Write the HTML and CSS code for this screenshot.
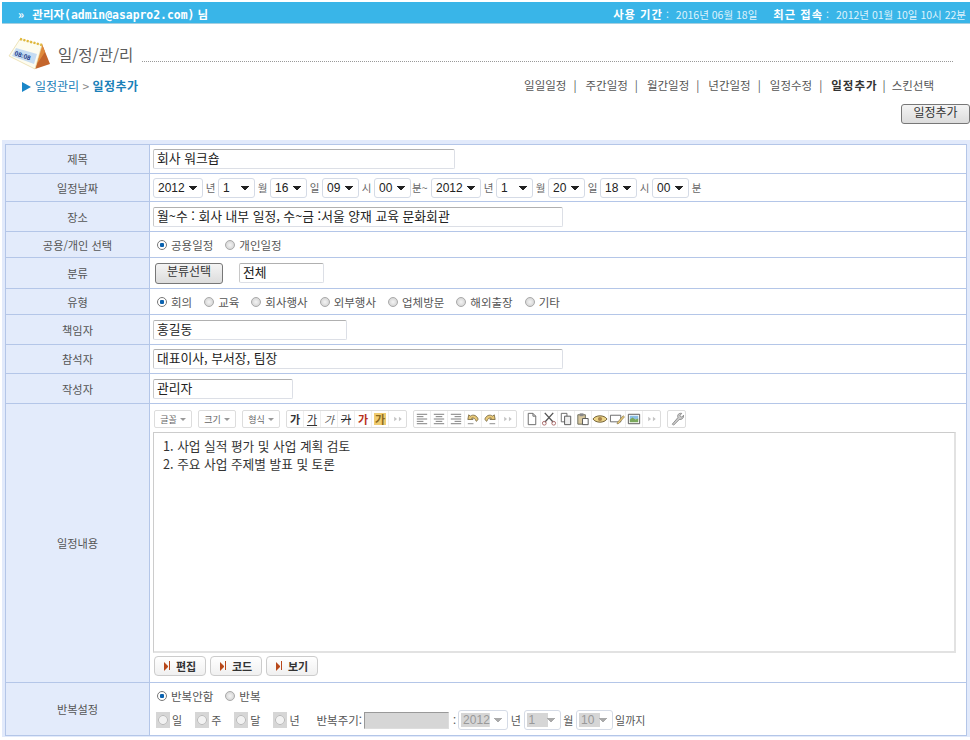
FILE: index.html
```html
<!DOCTYPE html>
<html lang="ko">
<head>
    <meta charset="UTF-8">
    <title>일정관리</title>
    <link rel="stylesheet" href="styles.css">
</head>
<body>
    <svg class="defs" width="0" height="0">
        <symbol id="more" viewBox="0 0 17 17"><path d="M5 6l3 2.500-3 2.500zM10 6l3 2.500-3 2.500z" fill="#c4c4c4"/></symbol>
        <symbol id="left" viewBox="0 0 17 17"><path d="M3 3.500h11M3 6h7M3 8.500h11M3 11h7M3 13.500h11" stroke="#777" fill="none"/></symbol>
        <symbol id="center" viewBox="0 0 17 17"><path d="M3 3.500h11M5 6h7M3 8.500h11M5 11h7M3 13.500h11" stroke="#777" fill="none"/></symbol>
        <symbol id="right" viewBox="0 0 17 17"><path d="M3 3.500h11M7 6h7M3 8.500h11M7 11h7M3 13.500h11" stroke="#777" fill="none"/></symbol>
        <symbol id="undo" viewBox="0 0 17 17"><path d="M3 9l1-5 1.500 1.500C9 3 13 5 14 9l-2 2C11 8 9 7 7 7.500L8.500 9z" fill="#e8c878" stroke="#6a5a30" stroke-width=".8"/><path d="M3 13.500h6" stroke="#888"/></symbol>
        <symbol id="redo" viewBox="0 0 17 17"><path d="M14 9l-1-5-1.500 1.500C8 3 4 5 3 9l2 2c1-3 3-4 5-3.500L8.500 9z" fill="#e8c878" stroke="#6a5a30" stroke-width=".8"/><path d="M8 13.500h6" stroke="#888"/></symbol>
        <symbol id="doc" viewBox="0 0 17 17"><path d="M4.500 2.500h5l3 3v9h-8zM9.500 2.500v3h3" fill="#fff" stroke="#666"/></symbol>
        <symbol id="cut" viewBox="0 0 17 17"><path d="M4 2l9 10M13 2l-9 10" stroke="#555" stroke-width="1.400"/><circle cx="3.500" cy="13" r="2" fill="none" stroke="#a66"/><circle cx="13.500" cy="13" r="2" fill="none" stroke="#a66"/></symbol>
        <symbol id="copy" viewBox="0 0 17 17"><path d="M3.500 2.500h6v9h-6z" fill="#fff" stroke="#666"/><path d="M7 5.500h6.500v9H7z" fill="#eee" stroke="#555"/></symbol>
        <symbol id="paste" viewBox="0 0 17 17"><path d="M3 4h8v10H3z" fill="#d8c8a0" stroke="#665"/><path d="M5 2.500h4v3H5z" fill="#888"/><path d="M8 8h6v6.500H8z" fill="#fff" stroke="#555"/></symbol>
        <symbol id="eye" viewBox="0 0 17 17"><path d="M1 8.500c3-4.500 12-4.500 15 0-3 4.500-12 4.500-15 0z" fill="#ecd488" stroke="#6b5a30"/><circle cx="8.500" cy="8.500" r="2.200" fill="#a8844a"/></symbol>
        <symbol id="note" viewBox="0 0 17 17"><path d="M1.500 4.500h11v7h-11z" fill="#fff" stroke="#666"/><path d="M9 12l6-7 1.500 1.200-6 7-2 .5z" fill="#e8c878" stroke="#7a6a3a" stroke-width=".6"/></symbol>
        <symbol id="pic" viewBox="0 0 17 17"><path d="M2.500 3.500h12v10h-12z" fill="#fff" stroke="#555"/><path d="M4 5h9v4H4z" fill="#8cc0e6"/><path d="M4 12V9l3-2 3 2 3-1v4z" fill="#7aa85c"/></symbol>
        <symbol id="wrench" viewBox="0 0 17 17"><path d="M4 14l6-7c-1-3 1-5 4-4.500l-2 2.500 2 1.500 2-2c.5 3-2 5-4.500 4.500L5.500 15z" fill="#ccc" stroke="#777" stroke-width=".8"/></symbol>
    </svg>

    <div class="topbar">
        <div class="user"><span class="arrows">»</span> 관리자<span class="latin">(admin@asapro2.com)</span> 님</div>
        <div class="period"><b>사용 기간</b><i class="sep">:</i>2016년 06월 18일<b class="last">최근 접속</b><i class="sep">:</i>2012년 01월 10일 10시 22분</div>
    </div>

    <div class="header">
        <div class="title-row">
            <svg class="logo" width="44" height="36" viewBox="0 0 44 36">
                <path d="M34 7l8 20-15 5z" fill="#c4652c"/>
                <path d="M34 7l3 8-8 12z" fill="#e08a3c"/>
                <path d="M12 2L34 8 27 32 1 19z" fill="#fdfcf0" stroke="#e6d9a0" stroke-width=".7"/>
                <path d="M12 2l22 6" stroke="#e0b83c" stroke-width="2.400" stroke-dasharray="2 1.500" fill="none"/>
                <path d="M8 11L29 17 26 27 4 19z" fill="#c6dcf2"/>
                <text class="logo-text" transform="translate(6 18) rotate(19)">08:08</text>
            </svg>
            <h1 class="page-title">일/정/관/리</h1>
            <div class="dots"></div>
        </div>
        <div class="nav-row">
            <div class="crumb"><i class="tri"></i>일정관리 <span class="gt">&gt;</span> <b>일정추가</b></div>
            <div class="nav">
                <a>일일일정</a><s>|</s><a>주간일정</a><s>|</s><a>월간일정</a><s>|</s><a>년간일정</a><s>|</s><a>일정수정</a><s>|</s><a class="on">일정추가</a><s class="tight">|</s><a>스킨선택</a>
            </div>
        </div>
        <div class="btn-row"><button class="btn btn-add">일정추가</button></div>
    </div>

    <div class="wrap">
        <table class="form">
            <tr class="h29"><th>제목</th><td><input class="w302" value="회사 워크숍"></td></tr>
            <tr class="h28"><th>일정날짜</th><td>
                <div class="dates">
                    <select class="y"><option>2012</option></select><span>년</span>
                    <select><option>1</option></select><span>월</span>
                    <select><option>16</option></select><span>일</span>
                    <select><option>09</option></select><span>시</span>
                    <select><option>00</option></select><span class="wide">분~</span>
                    <select class="y"><option>2012</option></select><span>년</span>
                    <select><option>1</option></select><span>월</span>
                    <select><option>20</option></select><span>일</span>
                    <select><option>18</option></select><span>시</span>
                    <select><option>00</option></select><span>분</span>
                </div>
            </td></tr>
            <tr class="h30"><th>장소</th><td><input class="w410" value="월~수 : 회사 내부 일정, 수~금 :서울 양재 교육 문화회관"></td></tr>
            <tr class="h26"><th>공용/개인 선택</th><td>
                <div class="radios first">
                    <label><input type="radio" name="open" checked>공용일정</label>
                    <label><input type="radio" name="open">개인일정</label>
                </div>
            </td></tr>
            <tr class="h31"><th>분류</th><td>
                <div class="cat"><button class="btn btn-cat">분류선택</button><input class="w85" value="전체"></div>
            </td></tr>
            <tr class="h26"><th>유형</th><td>
                <div class="radios first">
                    <label><input type="radio" name="kind" checked>회의</label>
                    <label><input type="radio" name="kind">교육</label>
                    <label><input type="radio" name="kind">회사행사</label>
                    <label><input type="radio" name="kind">외부행사</label>
                    <label><input type="radio" name="kind">업체방문</label>
                    <label><input type="radio" name="kind">해외출장</label>
                    <label><input type="radio" name="kind">기타</label>
                </div>
            </td></tr>
            <tr class="h30"><th>책임자</th><td><input class="w194" value="홍길동"></td></tr>
            <tr class="h29"><th>참석자</th><td><input class="w410" value="대표이사, 부서장, 팀장"></td></tr>
            <tr class="h30"><th>작성자</th><td><input class="w140" value="관리자"></td></tr>
            <tr class="h279"><th>일정내용</th><td class="editor-cell">
                <div class="toolbar">
                    <span class="tb-drop">글꼴<i></i></span>
                    <span class="tb-drop">크기<i></i></span>
                    <span class="tb-drop">형식<i></i></span>
                    <span class="tb-group">
                        <b class="tb t-b">가</b><b class="tb t-u">가</b><b class="tb t-i">가</b><b class="tb t-s">가</b><b class="tb t-c">가</b><b class="tb t-h"><span>가</span></b><svg class="tb"><use href="#more"/></svg>
                    </span>
                    <span class="tb-group">
                        <svg class="tb"><use href="#left"/></svg><svg class="tb"><use href="#center"/></svg><svg class="tb"><use href="#right"/></svg><svg class="tb"><use href="#undo"/></svg><svg class="tb"><use href="#redo"/></svg><svg class="tb"><use href="#more"/></svg>
                    </span>
                    <span class="tb-group">
                        <svg class="tb"><use href="#doc"/></svg><svg class="tb"><use href="#cut"/></svg><svg class="tb"><use href="#copy"/></svg><svg class="tb"><use href="#paste"/></svg><svg class="tb"><use href="#eye"/></svg><svg class="tb"><use href="#note"/></svg><svg class="tb"><use href="#pic"/></svg><svg class="tb"><use href="#more"/></svg>
                    </span>
                    <span class="tb-group"><svg class="tb"><use href="#wrench"/></svg></span>
                </div>
                <div class="editor">
                    <p>1. 사업 실적 평가 및 사업 계획 검토</p>
                    <p>2. 주요 사업 주제별 발표 및 토론</p>
                </div>
                <div class="tabs">
                    <span class="tab"><i></i>편집</span>
                    <span class="tab"><i></i>코드</span>
                    <span class="tab"><i></i>보기</span>
                </div>
            </td></tr>
            <tr class="h53"><th>반복설정</th><td>
                <div class="radios repeat">
                    <label><input type="radio" name="rep" checked>반복안함</label>
                    <label><input type="radio" name="rep">반복</label>
                </div>
                <div class="repeat-opts">
                    <label class="off"><input type="radio" name="per" disabled>일</label>
                    <label class="off"><input type="radio" name="per" disabled>주</label>
                    <label class="off"><input type="radio" name="per" disabled>달</label>
                    <label class="off"><input type="radio" name="per" disabled>년</label>
                    <span class="period-label">반복주기:</span><input class="until" disabled>
                    <span class="colon">:</span>
                    <select class="y" disabled><option>2012</option></select><span class="unit">년</span>
                    <select disabled><option>1</option></select><span class="unit">월</span>
                    <select disabled><option>10</option></select><span class="end">일까지</span>
                </div>
            </td></tr>
        </table>
    </div>
</body>
</html>
```

FILE: styles.css
```css
* { box-sizing: border-box; }
body {
    margin: 0;
    padding-top: 2px;
    background: #fff;
    font-family: "Noto Sans CJK KR", "Liberation Sans", sans-serif;
    font-size: 10px;
    color: #555;
    overflow: hidden;
}
.defs { position: absolute; }

/* top bar */
.topbar {
    display: flex;
    justify-content: space-between;
    align-items: center;
    height: 22px;
    margin-left: 2px;
    padding: 2px 4px 0 16px;
    background: #39b5e8;
    border-bottom: 1px solid #a5cfe0;
    color: #fff;
}
.user {
    font-size: 11.500px;
    font-weight: bold;
}
.latin { font-family: "DejaVu Sans Mono", monospace; font-size: 11.400px; }
.arrows { margin-right: 5px; }
.period { font-size: 10.500px; color: #dff3fc; }
.period b { font-size: 11.300px; color: #fff; letter-spacing: 1px; }
.period .last { margin-left: 16px; }
.sep { margin: 0 7px 0 3px; font-style: normal; }

/* page header */
.header { height: 116px; padding-left: 8px; }
.title-row {
    display: flex;
    align-items: center;
    height: 48px;
    padding-top: 14px;
}
.logo { flex: none; }
.logo-text { font: bold 6.500px "Liberation Sans", sans-serif; fill: #1c3c8c; }
.page-title {
    margin: 0 0 2px 6px;
    font-size: 15.500px;
    font-weight: normal;
    color: #5c5c5c;
}
.dots {
    width: 811px;
    margin: 12px 0 0 9px;
    border-top: 1px dotted #999;
}
.nav-row {
    display: flex;
    justify-content: space-between;
    align-items: center;
    height: 26px;
    padding: 0 36px 0 14px;
}
.crumb { font-size: 12px; color: #1a80b8; }
.crumb b { letter-spacing: .4px; }
.gt { color: #888; }
.tri {
    display: inline-block;
    width: 0;
    height: 0;
    margin-right: 4px;
    border-left: 9px solid #1a86c8;
    border-top: 5px solid transparent;
    border-bottom: 5px solid transparent;
    vertical-align: -1px;
}
.nav { display: flex; align-items: center; font-size: 11.500px; color: #555; }
.nav a { display: block; }
.nav s { margin: 0 9px 0 7px; text-decoration: none; }
.nav s.tight { margin: 0 6px 0 5px; }
.nav .on { font-weight: bold; color: #333; letter-spacing: 1px; }
.btn-row { display: flex; justify-content: flex-end; margin-top: 6px; }
.btn {
    font-family: inherit;
    color: #333;
    border: 1px solid #777;
    border-radius: 3px;
    background: linear-gradient(#f4f4f4, #dcdcdc);
    padding: 0 0 4px;
}
.btn-add { width: 69px; height: 20px; font-size: 12px; line-height: 14px; }

/* form */
.wrap {
    margin-left: 2px;
    padding: 4px 3px 1px 3px;
    background: #e2eafb;
}
.form {
    width: 962px;
    border-collapse: collapse;
    background: #fff;
    table-layout: fixed;
}
.form th, .form td {
    border: 1px solid #b4c6e8;
    padding: 0 0 0 3px;
}
.form th {
    width: 144px;
    padding: 0;
    background: #e3ebfb;
    font-size: 11.200px;
    font-weight: normal;
    color: #555;
    text-align: center;
}
.h26 { height: 26px; }
.h28 { height: 28px; }
.h29 { height: 29px; }
.h30 { height: 30px; }
.h31 { height: 31px; }
.h53 { height: 53px; }
.h279 { height: 279px; }

.form input:not([type=radio]) {
    display: block;
    height: 20px;
    padding: 0 3px 3px;
    font-family: "Noto Sans CJK KR", "Liberation Sans", sans-serif;
    font-size: 12.800px;
    color: #222;
    border: 1px solid #dcdfe6;
    border-top-color: #b0b0b0;
    border-left-color: #c8c8c8;
    border-radius: 2px;
    background: #fff;
    outline: none;
}
.w85 { width: 85px; }
.w140 { width: 140px; }
.w194 { width: 194px; }
.w302 { width: 302px; }
.w410 { width: 410px; }

select {
    flex: none;
    width: 37px;
    height: 20px;
    padding: 0 0 0 4px;
    font: 12px "Liberation Sans", sans-serif;
    color: #222;
    border: 1px solid #d5dbe6;
    border-radius: 3px;
    appearance: none;
    background:
        linear-gradient(45deg, transparent 50%, #222 50%) right 9px center / 5px 4px no-repeat,
        linear-gradient(-45deg, transparent 50%, #222 50%) right 4px center / 5px 4px no-repeat,
        #fff;
}
select.y { width: 50px; }
select:disabled {
    color: #999;
    opacity: 1;
    background:
        linear-gradient(45deg, transparent 50%, #aaa 50%) right 9px center / 5px 4px no-repeat,
        linear-gradient(-45deg, transparent 50%, #aaa 50%) right 4px center / 5px 4px no-repeat,
        linear-gradient(#d6d6d6, #d6d6d6) 2px 2px / 60% 14px no-repeat,
        #fff;
}
.dates { display: flex; align-items: center; }
.dates span {
    width: 15px;
    font-size: 10.500px;
    color: #666;
    text-align: center;
}
.dates .wide { width: 20px; text-align: left; padding-left: 1px; white-space: nowrap; }

input[type=radio] {
    appearance: none;
    flex: none;
    width: 10px;
    height: 10px;
    margin: 0 4px 0 0;
    border: 1px solid #aaa;
    border-radius: 50%;
    background: radial-gradient(#f4f4f4, #ccc);
}
input[type=radio]:checked {
    border-color: #777;
    background: radial-gradient(#0a62b0 35%, #fff 45%);
}
.radios { display: flex; align-items: center; font-size: 11.500px; color: #555; }
.radios label { display: flex; align-items: center; }
.radios.first { padding-left: 4px; gap: 12px; }
.repeat { padding-left: 4px; gap: 12px; }
.cat { display: flex; align-items: center; gap: 16px; padding-left: 2px; }
.btn-cat { width: 68px; height: 21px; font-size: 12px; line-height: 14px; }

/* editor */
.editor-cell { vertical-align: top; }
.toolbar {
    display: flex;
    align-items: center;
    gap: 6px;
    height: 18px;
    margin: 6px 0 4px 1px;
}
.tb-drop {
    display: flex;
    justify-content: center;
    align-items: center;
    width: 38px;
    height: 18px;
    border: 1px solid #ddd;
    border-radius: 2px;
    font-size: 9px;
    color: #666;
}
.tb-drop i {
    margin: 1px 0 0 3px;
    border-top: 3px solid #999;
    border-left: 3px solid transparent;
    border-right: 3px solid transparent;
}
.tb-group {
    display: flex;
    border: 1px solid #ddd;
    border-radius: 2px;
    height: 18px;
}
.tb {
    display: block;
    width: 17px;
    height: 16px;
    border-right: 1px solid #eee;
    font-size: 11px;
    line-height: 16px;
    text-align: center;
    color: #333;
}
.tb:last-child { border-right: 0; }
.t-u { text-decoration: underline; font-weight: normal; }
.t-i { font-style: italic; font-weight: normal; color: #666; }
.t-s { text-decoration: line-through; font-weight: normal; }
.t-c { color: #b8321a; }
.t-h span { display: block; margin: 2px; height: 12px; line-height: 12px; background: #f0cc70; color: #8a6a20; }
.editor {
    width: 803px;
    height: 221px;
    padding: 4px 9px;
    border: 1px solid #ccc;
    border-right: 2px solid #e2e2e2;
    border-bottom: 2px solid #e2e2e2;
    font-size: 12.700px;
    color: #333;
}
.editor p { margin: 0; height: 18px; line-height: 18px; }
.tabs { display: flex; gap: 4px; margin: 3px 0 0 1px; }
.tab {
    display: flex;
    align-items: center;
    justify-content: center;
    width: 52px;
    height: 20px;
    border: 1px solid #ccc;
    border-radius: 4px;
    background: linear-gradient(#fff, #f0f0f0);
    font-size: 11px;
    font-weight: bold;
    color: #333;
}
.tab i {
    width: 7px;
    height: 9px;
    margin-right: 5px;
    border-left: 4px solid #b8481a;
    border-top: 4.500px solid transparent;
    border-bottom: 4.500px solid transparent;
    position: relative;
}
.tab i::after {
    content: "";
    position: absolute;
    left: 0;
    top: -4.500px;
    width: 1px;
    height: 9px;
    margin-left: 1px;
    background: #b8481a;
}

/* repeat */
.repeat-opts {
    display: flex;
    align-items: center;
    margin-top: 6px;
    padding-left: 3px;
    font-size: 11px;
    color: #555;
}
.off { display: flex; align-items: center; margin-right: 13px; }
.off input[type=radio] {
    width: 14px;
    height: 16px;
    margin-right: 2px;
    border: 0;
    border-radius: 0;
    background: radial-gradient(circle, #f2f2f2 3.500px, #bbb 4.500px, #d6d6d6 5px);
}
.period-label { margin: 0 2px 0 4px; font-size: 11.500px; }
.form input.until {
    flex: none;
    width: 85px;
    height: 17px;
    background: #d6d6d6;
    border: 1px solid #999;
    border-right-color: #ddd;
    border-bottom-color: #ddd;
    border-radius: 0;
}
.colon { margin: 0 2px 0 4px; }
.unit { width: 15.500px; text-align: center; }
.end { margin-left: 2px; }
```
